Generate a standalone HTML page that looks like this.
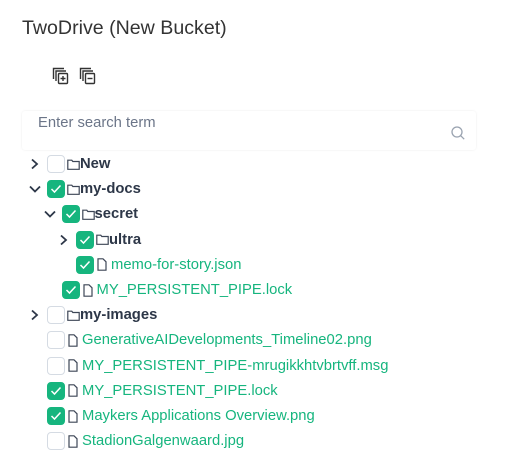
<!DOCTYPE html>
<html><head><style>
body{margin:0;width:522px;height:459px;background:#fff;font-family:"Liberation Sans",sans-serif;position:relative;overflow:hidden}
.t{position:absolute;left:22px;top:17px;font-size:19.6px;color:#333}
.s{position:absolute;left:22px;top:111px;width:454px;height:39px;box-shadow:0 0 2px rgba(0,0,0,.08);border-radius:3px}
.s span{position:absolute;left:16px;top:4px;font-size:14.8px;color:#6b7588}
.r{position:absolute;height:20px;display:flex;align-items:center;font-size:14.8px}
.cb{border:1px solid #d5dbe3;border-radius:4px;box-sizing:border-box;width:18px;height:18px;margin-right:2px;display:flex;align-items:center;justify-content:center}
.cb.c{background:#16b57e;border-color:#16b57e}
.fo{font-weight:bold;color:#2d3748}
.fi{color:#16b57e}
.ch{position:absolute}
</style></head><body>
<div class="t">TwoDrive (New Bucket)</div>
<svg style="position:absolute;left:52px;top:67px" width="50" height="20" viewBox="0 0 50 20" fill="none" stroke="#333" stroke-width="1.4">
<path d="M1.5 12V1.5H12"/><path d="M4 14V4h10"/><rect x="6.5" y="6.5" width="9" height="10" rx="1"/><path d="M11 9v5M8.5 11.5h5"/>
<path d="M28.5 12V1.5H39"/><path d="M31 14V4h10"/><rect x="33.5" y="6.5" width="9" height="10" rx="1"/><path d="M35.5 11.5h5"/>
</svg>
<div class="s"><span>Enter search term</span>
<svg style="position:absolute;left:428px;top:14px" width="16" height="16" viewBox="0 0 16 16" fill="none" stroke="#9aa3b0" stroke-width="1.3"><circle cx="7" cy="7" r="5"/><path d="M10.7 10.7l3.5 3.5"/></svg></div>
<div id="tree"></div>
<script>
var rows=[
[0,'d','New',0,'r'],[0,'d','my-docs',1,'d'],[1,'d','secret',1,'d'],[2,'d','ultra',1,'r'],[2,'f','memo-for-story.json',1],[1,'f','MY_PERSISTENT_PIPE.lock',1],[0,'d','my-images',0,'r'],
[0,'f','GenerativeAIDevelopments_Timeline02.png',0],[0,'f','MY_PERSISTENT_PIPE-mrugikkhtvbrtvff.msg',0],[0,'f','MY_PERSISTENT_PIPE.lock',1],[0,'f','Maykers Applications Overview.png',1],[0,'f','StadionGalgenwaard.jpg',0]];
var h='';
rows.forEach(function(r,i){
 var y=163+i*25.2-9, cx=47+r[0]*14.5;
 if(r[1]=='d'){
  var chx=cx-18;
  h+='<svg class="ch" style="left:'+chx+'px;top:'+(y+3)+'px" width="12" height="14" viewBox="0 0 12 14" fill="none" stroke="#2d3748" stroke-width="1.8">'+(r[4]=='r'?'<path d="M3 2.5l5 4.5-5 4.5"/>':'<path d="M1 4.5l5 5 5-5"/>')+'</svg>';
 }
 var cb='<div class="cb'+(r[3]?' c':'')+'">'+(r[3]?'<svg width="12" height="10" viewBox="0 0 12 10" fill="none" stroke="#fff" stroke-width="1.5"><path d="M1.5 5l3 3 6-6.5"/></svg>':'')+'</div>';
 var ic=r[1]=='d'?'<svg width="13" height="11" viewBox="0 0 13 11" fill="none" stroke="#3d4656" stroke-width="1.2"><path d="M.8 1.2h4l1 1.3h6.4v7.8H.8z"/></svg>':'<svg width="10" height="13" viewBox="0 0 10 13" fill="none" stroke="#3d4656" stroke-width="1.2" style="margin:0 4px 0 1px"><path d="M1 .8h5l3 3v8.4H1z"/></svg>';
 h+='<div class="r" style="left:'+cx+'px;top:'+y+'px">'+cb+ic+'<span class="'+(r[1]=='d'?'fo':'fi')+'">'+r[2]+'</span></div>';
});
document.getElementById('tree').innerHTML=h;
</script>
</body></html>
